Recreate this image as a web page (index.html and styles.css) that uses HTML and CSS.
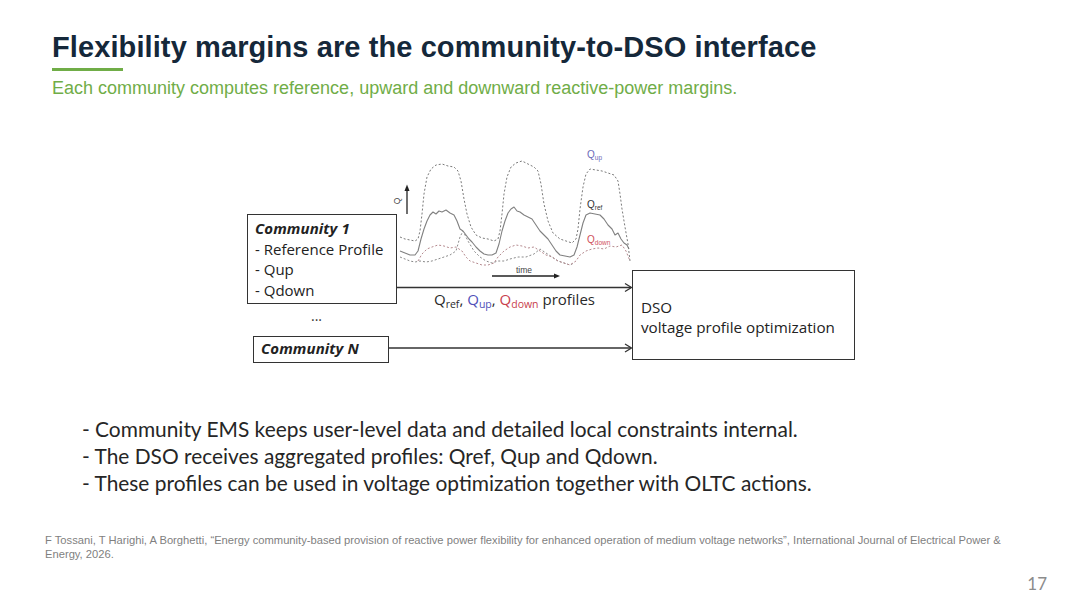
FILE: index.html
```html
<!DOCTYPE html>
<html lang="en">
<head>
<meta charset="utf-8">
<title>Flexibility margins</title>
<link rel="stylesheet" href="styles.css">
</head>
<body>
<div class="slide">
  <header class="header">
    <h1 class="title">Flexibility margins are the community-to-DSO interface</h1>
    <div class="title-rule"></div>
    <p class="subtitle">Each community computes reference, upward and downward reactive-power margins.</p>
  </header>

  <section class="diagram">
    <svg class="diagram-svg" viewBox="240 130 630 240" width="630" height="240">
      <!-- Q axis -->
      <line x1="407" y1="215" x2="407" y2="191" class="axis"/>
      <polygon points="404.5,192 407,185.5 409.5,192" class="axis-head"/>
      <text x="400" y="202" class="axis-label" transform="rotate(-90 400 202)" text-anchor="middle">Q</text>
      <!-- time axis -->
      <line x1="492" y1="277" x2="555" y2="277" class="axis"/>
      <polygon points="554,274.5 560,277 554,279.5" class="axis-head"/>
      <text x="524" y="274" class="axis-label" text-anchor="middle">time</text>

      <!-- Qup -->
      <polyline class="curve-up" points="400,238 405,240 410,241 415,242 418,240 420,232 422,215 424,195 427,178 431,170 436,166 442,165 448,167 454,168 458,172 461,182 464,200 467,215 471,228 476,236 482,239 488,240 494,242 498,240 500,232 502,215 504,195 507,178 511,168 516,164 522,162 528,165 534,168 538,172 541,185 544,205 548,222 553,234 560,240 566,242 572,244 576,240 578,230 580,210 583,188 586,175 590,170 596,171 602,172 608,174 614,176 618,182 620,195 622,210 625,228 628,245 630,262"/>
      <!-- Qref -->
      <polyline class="curve-ref" points="400,252 405,254 410,256 415,256 418,252 421,240 424,230 427,222 430,216 433,213 436,215 439,212 442,213 446,211 450,214 454,216 457,222 460,230 463,232 466,236 469,240 472,243 476,248 480,252 484,255 488,256 492,256 496,254 499,245 502,232 505,222 508,214 511,210 514,208 517,212 520,213 524,216 528,218 532,220 536,226 540,232 544,236 548,240 552,246 556,252 560,256 565,257 570,258 574,256 577,248 580,236 583,224 586,216 590,214 595,215 600,216 604,220 608,226 612,230 615,236 618,234 621,240 624,244 627,246 629,250"/>
      <!-- lower envelope -->
      <polyline class="curve-low" points="400,258 405,260 410,262 415,263 420,262 426,263 432,262 438,260 444,258 450,256 456,252 460,238 463,232 468,242 474,252 480,258 486,262 492,264 498,262 504,262 510,260 518,258 526,258 534,255 540,250 546,254 552,258 558,262 564,264 570,266 574,264"/>
      <!-- Qdown -->
      <polyline class="curve-down" points="418,262 422,255 427,250 432,248 438,246 444,247 450,249 456,248 462,252 466,258 470,262 476,264 482,266 488,266 494,264 498,258 504,252 510,248 516,246 522,247 528,249 534,248 540,252 546,256 552,258 558,262 564,264 570,266 576,262 580,256 586,252 592,250 598,249 604,250 610,247 616,248 622,246 626,252 630,262"/>

      <text x="587" y="159" class="lbl lbl-up">Q<tspan class="sub" dy="2">up</tspan></text>
      <text x="587" y="209" class="lbl lbl-ref">Q<tspan class="sub" dy="2">ref</tspan></text>
      <text x="587" y="244" class="lbl lbl-down">Q<tspan class="sub" dy="2">down</tspan></text>

      <!-- connectors -->
      <line x1="396" y1="288.5" x2="631" y2="288.5" class="link"/>
      <polyline points="625,284.5 631.5,288.5 625,292.5" class="link-head"/>
      <line x1="388" y1="349" x2="631" y2="349" class="link"/>
      <polyline points="625,345 631.5,349 625,353" class="link-head"/>
    </svg>

    <div class="node node-c1">
      <div class="node-title">Community 1</div>
      <div>- Reference Profile</div>
      <div>- Qup</div>
      <div>- Qdown</div>
    </div>
    <div class="ellipsis">...</div>
    <div class="node node-cn">
      <div class="node-title">Community N</div>
    </div>
    <div class="flow-label">
      <span class="q-ref">Q<sub>ref</sub>,</span>
      <span class="q-up">Q<sub>up</sub></span><span class="q-ref">,</span>
      <span class="q-down">Q<sub>down</sub></span>
      <span class="q-ref">profiles</span>
    </div>
    <div class="node node-dso">
      <div>DSO</div>
      <div>voltage profile optimization</div>
    </div>
  </section>

  <section class="bullets">
    <p>- Community EMS keeps user-level data and detailed local constraints internal.</p>
    <p>- The DSO receives aggregated profiles: Qref, Qup and Qdown.</p>
    <p>- These profiles can be used in voltage optimization together with OLTC actions.</p>
  </section>

  <p class="citation">F Tossani, T Harighi, A Borghetti, “Energy community-based provision of reactive power flexibility for enhanced operation of medium voltage networks”, International Journal of Electrical Power &amp; Energy, 2026.</p>

  <div class="page-num">17</div>
</div>
</body>
</html>
```

FILE: styles.css
```css
* { box-sizing: border-box; }

html, body {
  margin: 0;
  padding: 0;
  background: #ffffff;
}

.slide {
  width: 1080px;
  height: 608px;
  overflow: hidden;
  display: flex;
  flex-direction: column;
  font-family: "Liberation Sans", Arial, sans-serif;
}

.header {
  padding: 30px 0 0 52px;
}

.title {
  margin: 0;
  font-size: 29px;
  line-height: 34px;
  font-weight: 700;
  color: #15283a;
  letter-spacing: 0.1px;
}

.title-rule {
  width: 71px;
  height: 3px;
  background: #70ad47;
  margin-top: 4px;
}

.subtitle {
  margin: 6px 0 0;
  font-size: 18px;
  line-height: 22px;
  color: #70ad47;
}

.diagram {
  position: relative;
  margin: 30px 0 0 240px;
  width: 630px;
  height: 240px;
  font-family: "Open Sans", "Noto Sans", sans-serif;
  color: #222;
}

.diagram-svg {
  position: absolute;
  left: 0;
  top: 0;
}

.axis { stroke: #222; stroke-width: 1.3; }
.axis-head { fill: #222; }
.axis-label { font-family: "Liberation Sans", Arial, sans-serif; font-size: 8.5px; fill: #444; }

.curve-up, .curve-ref, .curve-low, .curve-down {
  fill: none;
  stroke-linejoin: round;
}
.curve-up { stroke: #7a7a7a; stroke-width: 1; stroke-dasharray: 2 2; }
.curve-ref { stroke: #808080; stroke-width: 1.1; }
.curve-low { stroke: #8a8a8a; stroke-width: 1; stroke-dasharray: 2 2; }
.curve-down { stroke: #b58a8f; stroke-width: 1; stroke-dasharray: 2 2; }

.lbl { font-family: "Liberation Sans", Arial, sans-serif; font-size: 10px; }
.lbl .sub { font-size: 6.5px; }
.lbl-up { fill: #6a6ab8; }
.lbl-ref { fill: #333; }
.lbl-down { fill: #d0505a; }

.link { stroke: #333; stroke-width: 1.3; }
.link-head { fill: none; stroke: #333; stroke-width: 1.3; }

.node {
  position: absolute;
  border: 1.5px solid #333;
  background: #fff;
  font-size: 15px;
  line-height: 20.5px;
  color: #222;
}

.node-title {
  font-weight: 700;
  font-style: italic;
  letter-spacing: 0.1px;
}

.node-c1 {
  left: 7px;
  top: 85px;
  width: 150px;
  height: 90px;
  padding: 3px 0 0 7px;
}

.node-cn {
  left: 13px;
  top: 207px;
  width: 136px;
  height: 27px;
  padding: 1px 0 0 7px;
}

.ellipsis {
  position: absolute;
  left: 71px;
  top: 177px;
  font-size: 14px;
  color: #333;
}

.flow-label {
  position: absolute;
  left: 194px;
  top: 160px;
  font-size: 15px;
  line-height: 20px;
  white-space: nowrap;
}
.flow-label sub {
  font-size: 10.5px;
  vertical-align: -3px;
  line-height: 0;
}
.q-ref { color: #2a2a2a; }
.q-up { color: #5050b8; }
.q-down { color: #c8404d; }

.node-dso {
  left: 392px;
  top: 141px;
  width: 223px;
  height: 90px;
  padding: 4px 0 0 8px;
  display: flex;
  flex-direction: column;
  justify-content: center;
  line-height: 20px;
  font-size: 15.2px;
}

.bullets {
  margin: 46px 0 0 82px;
  font-family: Lato, "Noto Sans", sans-serif;
  font-size: 20.9px;
  line-height: 27px;
  color: #262626;
}

.bullets p { margin: 0; }

.citation {
  margin: 37px 0 0 45px;
  width: 985px;
  font-size: 11.2px;
  line-height: 14px;
  color: #7f7f7f;
}

.page-num {
  align-self: flex-end;
  margin: 13px 33px 0 0;
  font-family: Lato, "Noto Sans", sans-serif;
  font-size: 17px;
  line-height: 20px;
  color: #8c8c8c;
}
```
